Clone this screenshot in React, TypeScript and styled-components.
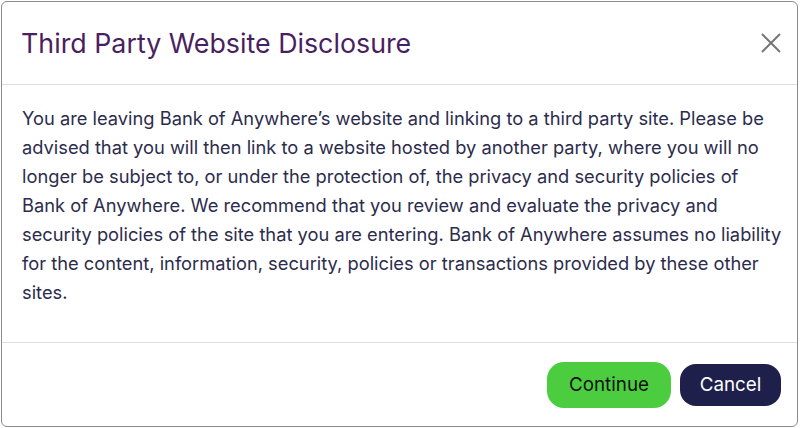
import { createGlobalStyle, styled } from 'styled-components';

const GlobalStyle = createGlobalStyle`
  html, body {
    margin: 0;
    padding: 0;
    background: #ffffff;
  }
  body {
    font-family: Inter, "Liberation Sans", sans-serif;
  }
`;

const Dialog = styled.div`
  margin: 1px;
  width: 797px;
  height: 426px;
  box-sizing: border-box;
  border: 1px solid #8a8a8a;
  border-radius: 6px;
  display: flex;
  flex-direction: column;
  background: #ffffff;
`;

const Header = styled.div`
  height: 82px;
  flex-shrink: 0;
  display: flex;
  align-items: center;
  justify-content: space-between;
  padding: 0 13px 0 19px;
  border-bottom: 1px solid #dedede;
`;

const Title = styled.h2`
  margin: 0;
  font-size: 26.8px;
  font-weight: 400;
  color: #4a1f5f;
  line-height: 32px;
`;

const CloseButton = styled.button`
  width: 26px;
  height: 26px;
  padding: 0;
  border: none;
  background: transparent;
  display: flex;
  align-items: center;
  justify-content: center;
  cursor: pointer;
`;

const Body = styled.div`
  flex: 1;
  padding: 19px 0 0 20px;
  border-bottom: 1px solid #dedede;
`;

const Text = styled.p`
  margin: 0;
  font-size: 18.3px;
  line-height: 29px;
  color: #2c2c4c;
  white-space: nowrap;
`;

const Footer = styled.div`
  height: 83px;
  flex-shrink: 0;
  display: flex;
  align-items: center;
  justify-content: flex-end;
  gap: 9px;
  padding: 0 16px;
`;

const Button = styled.button<{ $variant: 'primary' | 'secondary' }>`
  font-family: inherit;
  font-size: 18.8px;
  border: none;
  cursor: pointer;
  ${(p) =>
    p.$variant === 'primary'
      ? `
    width: 124px;
    height: 46px;
    border-radius: 17px;
    background: #4ccd40;
    color: #111111;
  `
      : `
    width: 101px;
    height: 42px;
    border-radius: 16px;
    background: #1e1f4a;
    color: #ffffff;
  `}
`;

const lines = [
  'You are leaving Bank of Anywhere’s website and linking to a third party site. Please be',
  'advised that you will then link to a website hosted by another party, where you will no',
  'longer be subject to, or under the protection of, the privacy and security policies of',
  'Bank of Anywhere. We recommend that you review and evaluate the privacy and',
  'security policies of the site that you are entering. Bank of Anywhere assumes no liability',
  'for the content, information, security, policies or transactions provided by these other',
  'sites.',
];

const App = () => (
  <>
    <GlobalStyle />
    <Dialog>
      <Header>
        <Title>Third Party Website Disclosure</Title>
        <CloseButton aria-label="Close">
          <svg width="20" height="20" viewBox="0 0 20 20">
            <path d="M1 1 L19 19 M19 1 L1 19" stroke="#777777" strokeWidth="2" fill="none" />
          </svg>
        </CloseButton>
      </Header>
      <Body>
        <Text>
          {lines.map((line, i) => (
            <span key={i}>
              {line}
              {i < lines.length - 1 && <br />}
            </span>
          ))}
        </Text>
      </Body>
      <Footer>
        <Button $variant="primary">Continue</Button>
        <Button $variant="secondary">Cancel</Button>
      </Footer>
    </Dialog>
  </>
);

export default App;
